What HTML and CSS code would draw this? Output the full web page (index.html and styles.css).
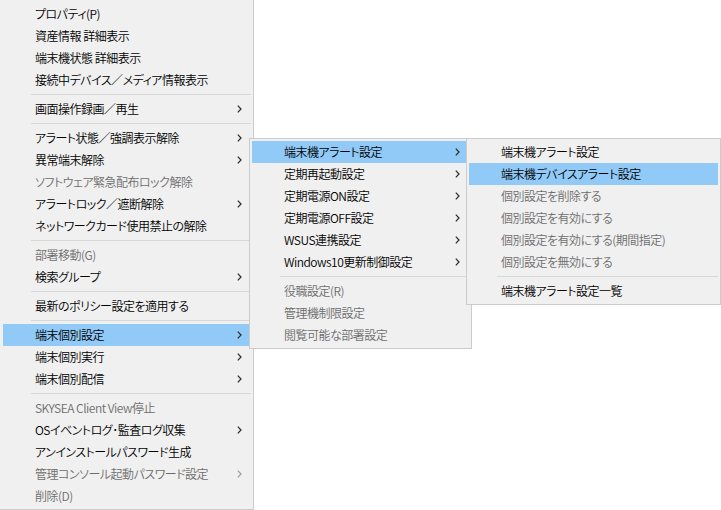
FILE: index.html
```html
<!DOCTYPE html>
<html lang="ja">
<head>
<meta charset="utf-8">
<link rel="stylesheet" href="styles.css">
</head>
<body>
<div class="menu menu-main">
  <div class="item">プロパティ(P)</div>
  <div class="item">資産情報 詳細表示</div>
  <div class="item">端末機状態 詳細表示</div>
  <div class="item">接続中デバイス／メディア情報表示</div>
  <div class="sep"></div>
  <div class="item sub">画面操作録画／再生<svg class="arr" width="5" height="8" viewBox="0 0 5 8"><polyline points="0.8,0.6 4,4 0.8,7.4"/></svg></div>
  <div class="sep"></div>
  <div class="item sub">アラート状態／強調表示解除<svg class="arr" width="5" height="8" viewBox="0 0 5 8"><polyline points="0.8,0.6 4,4 0.8,7.4"/></svg></div>
  <div class="item sub">異常端末解除<svg class="arr" width="5" height="8" viewBox="0 0 5 8"><polyline points="0.8,0.6 4,4 0.8,7.4"/></svg></div>
  <div class="item dis">ソフトウェア緊急配布ロック解除</div>
  <div class="item sub">アラートロック／遮断解除<svg class="arr" width="5" height="8" viewBox="0 0 5 8"><polyline points="0.8,0.6 4,4 0.8,7.4"/></svg></div>
  <div class="item">ネットワークカード使用禁止の解除</div>
  <div class="sep"></div>
  <div class="item dis">部署移動(G)</div>
  <div class="item sub">検索グループ<svg class="arr" width="5" height="8" viewBox="0 0 5 8"><polyline points="0.8,0.6 4,4 0.8,7.4"/></svg></div>
  <div class="sep"></div>
  <div class="item">最新のポリシー設定を適用する</div>
  <div class="sep"></div>
  <div class="item sub hl">端末個別設定<svg class="arr" width="5" height="8" viewBox="0 0 5 8"><polyline points="0.8,0.6 4,4 0.8,7.4"/></svg></div>
  <div class="item sub">端末個別実行<svg class="arr" width="5" height="8" viewBox="0 0 5 8"><polyline points="0.8,0.6 4,4 0.8,7.4"/></svg></div>
  <div class="item sub">端末個別配信<svg class="arr" width="5" height="8" viewBox="0 0 5 8"><polyline points="0.8,0.6 4,4 0.8,7.4"/></svg></div>
  <div class="sep"></div>
  <div class="item dis">SKYSEA Client View停止</div>
  <div class="item sub">OSイベントログ･監査ログ収集<svg class="arr" width="5" height="8" viewBox="0 0 5 8"><polyline points="0.8,0.6 4,4 0.8,7.4"/></svg></div>
  <div class="item">アンインストールパスワード生成</div>
  <div class="item sub dis">管理コンソール起動パスワード設定<svg class="arr" width="5" height="8" viewBox="0 0 5 8"><polyline points="0.8,0.6 4,4 0.8,7.4"/></svg></div>
  <div class="item dis">削除(D)</div>
</div>

<div class="menu menu-sub1">
  <div class="item sub hl">端末機アラート設定<svg class="arr" width="5" height="8" viewBox="0 0 5 8"><polyline points="0.8,0.6 4,4 0.8,7.4"/></svg></div>
  <div class="item sub">定期再起動設定<svg class="arr" width="5" height="8" viewBox="0 0 5 8"><polyline points="0.8,0.6 4,4 0.8,7.4"/></svg></div>
  <div class="item sub">定期電源ON設定<svg class="arr" width="5" height="8" viewBox="0 0 5 8"><polyline points="0.8,0.6 4,4 0.8,7.4"/></svg></div>
  <div class="item sub">定期電源OFF設定<svg class="arr" width="5" height="8" viewBox="0 0 5 8"><polyline points="0.8,0.6 4,4 0.8,7.4"/></svg></div>
  <div class="item sub">WSUS連携設定<svg class="arr" width="5" height="8" viewBox="0 0 5 8"><polyline points="0.8,0.6 4,4 0.8,7.4"/></svg></div>
  <div class="item sub">Windows10更新制御設定<svg class="arr" width="5" height="8" viewBox="0 0 5 8"><polyline points="0.8,0.6 4,4 0.8,7.4"/></svg></div>
  <div class="sep"></div>
  <div class="item dis">役職設定(R)</div>
  <div class="item dis">管理機制限設定</div>
  <div class="item dis">閲覧可能な部署設定</div>
</div>

<div class="menu menu-sub2">
  <div class="item">端末機アラート設定</div>
  <div class="item hl">端末機デバイスアラート設定</div>
  <div class="item dis">個別設定を削除する</div>
  <div class="item dis">個別設定を有効にする</div>
  <div class="item dis">個別設定を有効にする(期間指定)</div>
  <div class="item dis">個別設定を無効にする</div>
  <div class="sep"></div>
  <div class="item">端末機アラート設定一覧</div>
</div>
</body>
</html>
```
FILE: styles.css
```css
html, body {
  margin: 0;
  padding: 0;
  background: #ffffff;
  width: 721px;
  height: 510px;
  overflow: hidden;
}

body {
  position: relative;
  font-family: "Noto Sans CJK JP", "Noto Sans", sans-serif;
  font-size: 12px;
  font-weight: 350;
  letter-spacing: -0.5px;
  color: #000;
  font-feature-settings: "palt";
}

.menu {
  position: absolute;
  background: #f0f0f0;
  border: 1px solid #cccccc;
  padding: 2px;
  display: flex;
  flex-direction: column;
}

.menu-main {
  left: 0;
  top: 0;
  width: 248px;
  border-left: none;
  border-top: none;
  padding: 3px 2px 2px 3px;
  z-index: 1;
}

.menu-sub1 {
  left: 249px;
  top: 138px;
  width: 217px;
  z-index: 2;
}

.menu-sub2 {
  left: 466px;
  top: 138px;
  width: 249px;
  z-index: 3;
}

.item {
  height: 22px;
  line-height: 22px;
  padding-left: 32px;
  padding-right: 9px;
  display: flex;
  align-items: center;
  justify-content: space-between;
  white-space: nowrap;
}

.item.hl {
  background: #91c9f7;
}

.item.dis {
  color: #6d6d6d;
}

.arr {
  flex: none;
  fill: none;
  stroke: #303030;
  stroke-width: 1.3;
}

.item.dis .arr {
  stroke: #a0a0a0;
}

.sep {
  height: 1px;
  margin: 3px 0 3px 28px;
  background: #d7d7d7;
}
```
